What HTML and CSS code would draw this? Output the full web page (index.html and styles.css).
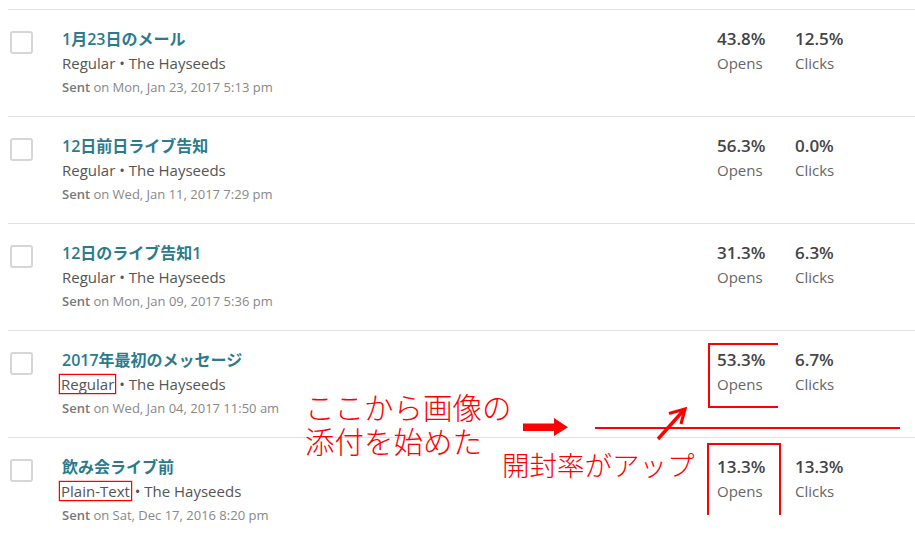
FILE: index.html
```html
<!DOCTYPE html>
<html lang="ja">
<head>
<meta charset="utf-8">
<title>Campaigns</title>
<link rel="stylesheet" href="styles.css">
</head>
<body>
<ul class="list">
  <li class="row">
    <div class="check"><span class="box"></span></div>
    <div class="main">
      <div class="title">1月23日のメール</div>
      <div class="meta">Regular • The Hayseeds</div>
      <div class="sent"><b>Sent</b> on Mon, Jan 23, 2017 5:13 pm</div>
    </div>
    <div class="stats">
      <div class="stat"><div class="pct">43.8%</div><div class="lbl">Opens</div></div>
      <div class="stat"><div class="pct">12.5%</div><div class="lbl">Clicks</div></div>
    </div>
  </li>
  <li class="row">
    <div class="check"><span class="box"></span></div>
    <div class="main">
      <div class="title">12日前日ライブ告知</div>
      <div class="meta">Regular • The Hayseeds</div>
      <div class="sent"><b>Sent</b> on Wed, Jan 11, 2017 7:29 pm</div>
    </div>
    <div class="stats">
      <div class="stat"><div class="pct">56.3%</div><div class="lbl">Opens</div></div>
      <div class="stat"><div class="pct">0.0%</div><div class="lbl">Clicks</div></div>
    </div>
  </li>
  <li class="row">
    <div class="check"><span class="box"></span></div>
    <div class="main">
      <div class="title">12日のライブ告知1</div>
      <div class="meta">Regular • The Hayseeds</div>
      <div class="sent"><b>Sent</b> on Mon, Jan 09, 2017 5:36 pm</div>
    </div>
    <div class="stats">
      <div class="stat"><div class="pct">31.3%</div><div class="lbl">Opens</div></div>
      <div class="stat"><div class="pct">6.3%</div><div class="lbl">Clicks</div></div>
    </div>
  </li>
  <li class="row">
    <div class="check"><span class="box"></span></div>
    <div class="main">
      <div class="title">2017年最初のメッセージ</div>
      <div class="meta"><span class="hl">Regular</span> • The Hayseeds</div>
      <div class="sent"><b>Sent</b> on Wed, Jan 04, 2017 11:50 am</div>
    </div>
    <div class="stats">
      <div class="stat"><div class="pct">53.3%</div><div class="lbl">Opens</div></div>
      <div class="stat"><div class="pct">6.7%</div><div class="lbl">Clicks</div></div>
    </div>
  </li>
  <li class="row">
    <div class="check"><span class="box"></span></div>
    <div class="main">
      <div class="title">飲み会ライブ前</div>
      <div class="meta"><span class="hl">Plain-Text</span> • The Hayseeds</div>
      <div class="sent"><b>Sent</b> on Sat, Dec 17, 2016 8:20 pm</div>
    </div>
    <div class="stats">
      <div class="stat"><div class="pct">13.3%</div><div class="lbl">Opens</div></div>
      <div class="stat"><div class="pct">13.3%</div><div class="lbl">Clicks</div></div>
    </div>
  </li>
</ul>

<div class="note note-start">
  <div class="note-line">ここから画像の</div>
  <div class="note-line">添付を始めた</div>
</div>
<div class="note note-up">開封率がアップ</div>
<div class="frame frame-a"></div>
<div class="frame frame-b"></div>
<svg class="marks" width="915" height="535" viewBox="0 0 915 535" aria-hidden="true">
  <rect x="523" y="423.5" width="35" height="7.5" fill="#f00"/>
  <polygon points="554,418 568,427.2 554,436" fill="#f00"/>
  <line x1="595" y1="428" x2="900" y2="428" stroke="#f00" stroke-width="2.2"/>
  <line x1="658" y1="439" x2="683" y2="411" stroke="#f00" stroke-width="3.4" stroke-linecap="butt"/>
  <polyline points="669,413.5 685,409 681,424" fill="none" stroke="#f00" stroke-width="3.2" stroke-linejoin="miter"/>
</svg>
</body>
</html>
```
FILE: styles.css
```css
html, body {
  margin: 0;
  padding: 0;
  overflow: hidden;
  background: #fff;
}
body {
  position: relative;
  width: 915px;
  height: 535px;
  font-family: "Open Sans", "Noto Sans CJK JP", sans-serif;
  color: #555;
}
.list {
  list-style: none;
  margin: 9px 0 0 8px;
  padding: 0;
}
.row {
  display: flex;
  align-items: flex-start;
  border-top: 1px solid #e3e3e3;
  padding: 17px 0 17px 0;
  height: 72px;
}
.check {
  width: 54px;
  flex: none;
  padding-top: 4px;
}
.box {
  display: block;
  margin-left: 2px;
  width: 19px;
  height: 19px;
  border: 2px solid #d6d6d6;
  border-radius: 3px;
  background: #fff;
}
.main {
  flex: 1;
  min-width: 0;
}
.title {
  font-family: "Open Sans", "Noto Sans CJK JP", sans-serif;
  font-weight: 600;
  font-size: 16px;
  line-height: 24px;
  color: #2b7b8d;
}
.meta {
  font-size: 15px;
  line-height: 24px;
  color: #555;
}
.hl {
  display: inline-block;
  line-height: 18px;
  padding: 0 1px;
  margin-left: -2px;
  outline: 1px solid #f00;
  box-shadow: 0 0 0 1.5px rgba(255, 0, 0, 0.45);
}
.sent {
  font-size: 13px;
  line-height: 24px;
  color: #888;
}
.sent b {
  font-weight: 600;
  color: #777;
}
.stats {
  display: flex;
  flex: none;
  padding-right: 42px;
}
.stat {
  width: 78px;
}
.pct {
  font-size: 17px;
  font-weight: 600;
  line-height: 24px;
  color: #444;
}
.lbl {
  font-size: 15px;
  line-height: 24px;
  color: #666;
}
.note {
  position: absolute;
  font-family: "Noto Sans CJK JP", sans-serif;
  font-weight: 300;
  color: #f00;
  white-space: nowrap;
}
.note-start {
  left: 305px;
  top: 389px;
  font-size: 29.5px;
}
.note-line {
  height: 34px;
  line-height: 34px;
}
.note-up {
  left: 502px;
  top: 445px;
  font-size: 27.5px;
  line-height: 38px;
}
.frame {
  position: absolute;
  border: 2px solid #f00;
}
.frame-a {
  left: 708px;
  top: 343px;
  width: 68px;
  height: 61px;
  border-right: none;
}
.frame-b {
  left: 707px;
  top: 443px;
  width: 70px;
  height: 70px;
  border-bottom: none;
}
.marks {
  position: absolute;
  left: 0;
  top: 0;
  pointer-events: none;
}
```
